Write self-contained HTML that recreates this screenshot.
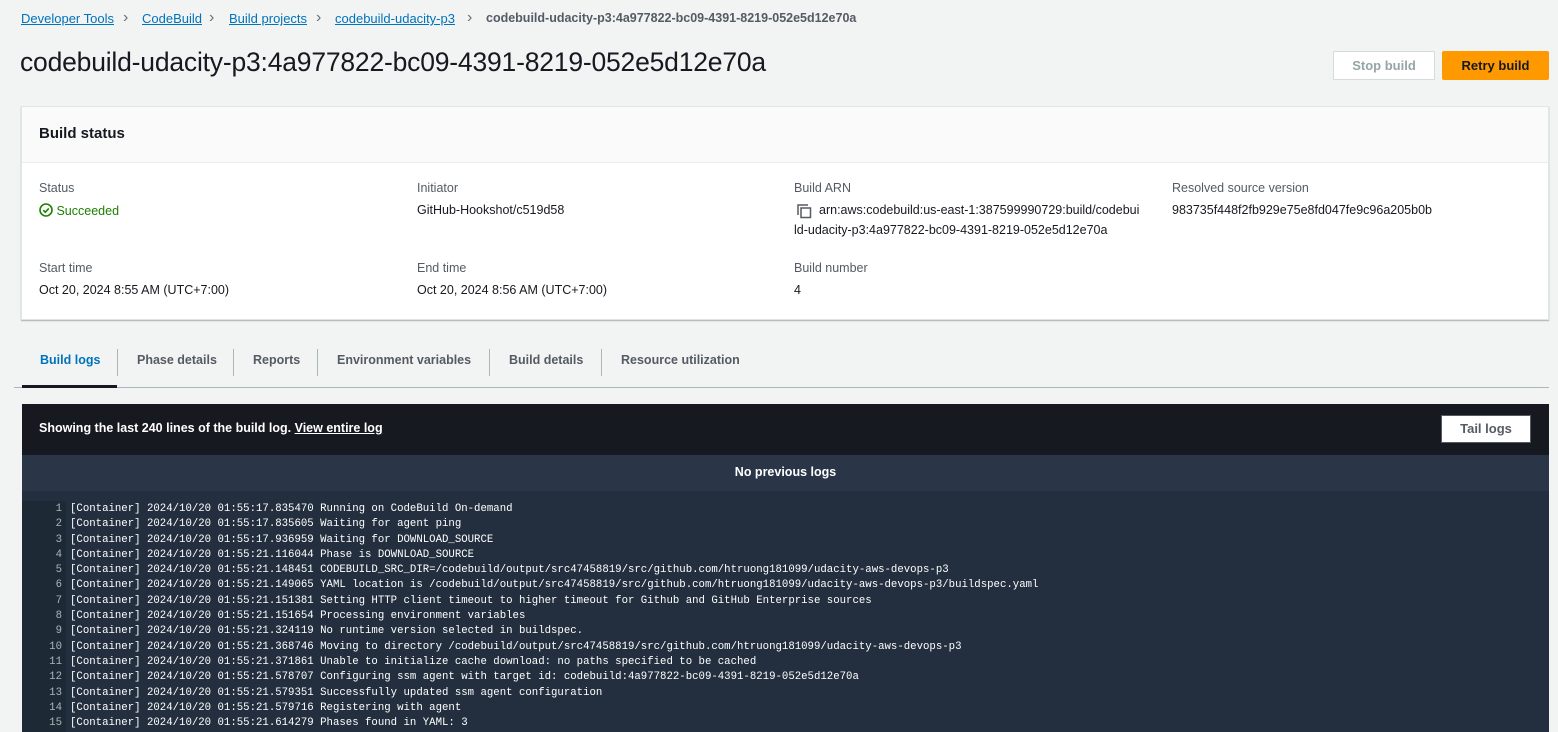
<!DOCTYPE html>
<html><head><meta charset="utf-8"><style>
*{margin:0;padding:0;box-sizing:border-box}
body{width:1558px;height:732px;overflow:hidden;background:#f2f3f3;font-family:"Liberation Sans",sans-serif;color:#16191f;position:relative}
.a{position:absolute;white-space:nowrap}
.bc{font-size:13px;top:11px;color:#0073bb;text-decoration:underline}
.sep{position:absolute;top:9px;font-size:16px;color:#687078}
.lbl{font-size:12.5px;color:#545b64}
.val{font-size:12.5px;color:#16191f}
.tab{font-size:12.5px;font-weight:bold;color:#545b64;top:353px}
.vs{position:absolute;top:349px;width:1px;height:27px;background:#aab7b8}
.log{font-family:"Liberation Mono",monospace;font-size:10.7px;color:#fff;line-height:15.3px}
</style></head><body>
<div class="a bc" style="left:21px">Developer Tools</div>
<div class="sep" style="left:123px">›</div>
<div class="a bc" style="left:142px">CodeBuild</div>
<div class="sep" style="left:209px">›</div>
<div class="a bc" style="left:229px">Build projects</div>
<div class="sep" style="left:316px">›</div>
<div class="a bc" style="left:335px">codebuild-udacity-p3</div>
<div class="sep" style="left:467px">›</div>
<div class="a bc" style="left:486px;color:#545b64;font-weight:bold;text-decoration:none;font-size:12.5px">codebuild-udacity-p3:4a977822-bc09-4391-8219-052e5d12e70a</div>
<div class="a" style="left:20px;top:47px;font-size:26.5px;letter-spacing:-0.2px">codebuild-udacity-p3:4a977822-bc09-4391-8219-052e5d12e70a</div>
<div class="a" style="left:1333px;top:51px;width:102px;height:29px;border:1px solid #d5dbdb;background:#fff;color:#95a5a6;font-weight:bold;font-size:13px;text-align:center;line-height:27px">Stop build</div>
<div class="a" style="left:1442px;top:51px;width:107px;height:29px;background:#ff9900;border-radius:2px;color:#16191f;font-weight:bold;font-size:13px;text-align:center;line-height:29px">Retry build</div>

<div class="a" style="left:21px;top:106px;width:1528px;height:214px;background:#fff;border:1px solid #e1e4e4;box-shadow:0 1px 1px rgba(0,28,36,.3)"></div>
<div class="a" style="left:22px;top:107px;width:1526px;height:56px;background:#fafafa;border-bottom:1px solid #eaeded"></div>
<div class="a" style="left:39px;top:125px;font-size:15px;font-weight:bold">Build status</div>

<div class="a lbl" style="left:39px;top:181px">Status</div>
<div class="a" style="left:39px;top:203px;font-size:12.5px;color:#1d8102"><svg width="14" height="14" viewBox="0 0 14 14" style="vertical-align:-2px"><circle cx="7" cy="7" r="6" fill="none" stroke="#1d8102" stroke-width="1.6"/><path d="M4.3 7.2l2 2 3.5-3.8" fill="none" stroke="#1d8102" stroke-width="1.6"/></svg> Succeeded</div>
<div class="a lbl" style="left:417px;top:181px">Initiator</div>
<div class="a val" style="left:417px;top:203px">GitHub-Hookshot/c519d58</div>
<div class="a lbl" style="left:794px;top:181px">Build ARN</div>
<svg class="a" style="left:797px;top:204px" width="15" height="15" viewBox="0 0 15 15"><path d="M1 11V1h10" fill="none" stroke="#545b64" stroke-width="1.5"/><rect x="4" y="4" width="9.5" height="9.5" fill="none" stroke="#545b64" stroke-width="1.5"/></svg>
<div class="a val" style="left:819px;top:203px">arn:aws:codebuild:us-east-1:387599990729:build/codebui</div>
<div class="a val" style="left:794px;top:223px">ld-udacity-p3:4a977822-bc09-4391-8219-052e5d12e70a</div>
<div class="a lbl" style="left:1172px;top:181px">Resolved source version</div>
<div class="a val" style="left:1172px;top:203px">983735f448f2fb929e75e8fd047fe9c96a205b0b</div>
<div class="a lbl" style="left:39px;top:261px">Start time</div>
<div class="a val" style="left:39px;top:283px">Oct 20, 2024 8:55 AM (UTC+7:00)</div>
<div class="a lbl" style="left:417px;top:261px">End time</div>
<div class="a val" style="left:417px;top:283px">Oct 20, 2024 8:56 AM (UTC+7:00)</div>
<div class="a lbl" style="left:794px;top:261px">Build number</div>
<div class="a val" style="left:794px;top:283px">4</div>

<div class="a tab" style="left:40px;color:#0073bb">Build logs</div>
<div class="vs" style="left:117px"></div>
<div class="a tab" style="left:137px">Phase details</div>
<div class="vs" style="left:233px"></div>
<div class="a tab" style="left:253px">Reports</div>
<div class="vs" style="left:317px"></div>
<div class="a tab" style="left:337px">Environment variables</div>
<div class="vs" style="left:489px"></div>
<div class="a tab" style="left:509px">Build details</div>
<div class="vs" style="left:601px"></div>
<div class="a tab" style="left:621px">Resource utilization</div>
<div class="a" style="left:14px;top:387px;width:1535px;height:1px;background:#aab7b8"></div>
<div class="a" style="left:22px;top:385px;width:95px;height:3px;background:#16191f"></div>

<div class="a" style="left:22px;top:404px;width:1527px;height:51px;background:#16191f"></div>
<div class="a" style="left:39px;top:421px;font-size:12.5px;color:#fff;font-weight:bold">Showing the last 240 lines of the build log. <u>View entire log</u></div>
<div class="a" style="left:1441px;top:415px;width:90px;height:28px;background:#fff;border:1px solid #545b64;color:#545b64;font-weight:bold;font-size:13px;text-align:center;line-height:26px">Tail logs</div>
<div class="a" style="left:22px;top:455px;width:1527px;height:36px;background:#2a3647"></div>
<div class="a" style="left:22px;top:465px;width:1527px;text-align:center;font-size:12.5px;font-weight:bold;color:#fff">No previous logs</div>
<div class="a" style="left:22px;top:491px;width:1527px;height:241px;background:#232f3e"></div>
<div class="a" style="left:22px;top:501px;width:44px;height:231px;background:#1e2936"></div>
<div class="a log" style="left:22px;top:502px;width:40px;text-align:right;color:#aab7b8">1<br>2<br>3<br>4<br>5<br>6<br>7<br>8<br>9<br>10<br>11<br>12<br>13<br>14<br>15</div>
<div class="a log" style="left:70px;top:502px">[Container] 2024/10/20 01:55:17.835470 Running on CodeBuild On-demand<br>[Container] 2024/10/20 01:55:17.835605 Waiting for agent ping<br>[Container] 2024/10/20 01:55:17.936959 Waiting for DOWNLOAD_SOURCE<br>[Container] 2024/10/20 01:55:21.116044 Phase is DOWNLOAD_SOURCE<br>[Container] 2024/10/20 01:55:21.148451 CODEBUILD_SRC_DIR=/codebuild/output/src47458819/src/github.com/htruong181099/udacity-aws-devops-p3<br>[Container] 2024/10/20 01:55:21.149065 YAML location is /codebuild/output/src47458819/src/github.com/htruong181099/udacity-aws-devops-p3/buildspec.yaml<br>[Container] 2024/10/20 01:55:21.151381 Setting HTTP client timeout to higher timeout for Github and GitHub Enterprise sources<br>[Container] 2024/10/20 01:55:21.151654 Processing environment variables<br>[Container] 2024/10/20 01:55:21.324119 No runtime version selected in buildspec.<br>[Container] 2024/10/20 01:55:21.368746 Moving to directory /codebuild/output/src47458819/src/github.com/htruong181099/udacity-aws-devops-p3<br>[Container] 2024/10/20 01:55:21.371861 Unable to initialize cache download: no paths specified to be cached<br>[Container] 2024/10/20 01:55:21.578707 Configuring ssm agent with target id: codebuild:4a977822-bc09-4391-8219-052e5d12e70a<br>[Container] 2024/10/20 01:55:21.579351 Successfully updated ssm agent configuration<br>[Container] 2024/10/20 01:55:21.579716 Registering with agent<br>[Container] 2024/10/20 01:55:21.614279 Phases found in YAML: 3</div>
</body></html>
